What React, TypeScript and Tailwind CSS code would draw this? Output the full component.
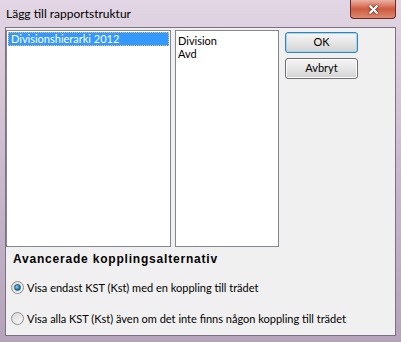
import { X } from 'lucide-react';

const UI = { fontFamily: 'Lato, "Liberation Sans", Arial, sans-serif' };

function Knapp({ text, standard }: { text: string; standard?: boolean }) {
  return (
    <button
      className={`h-[21px] w-[73px] rounded-[3px] border bg-gradient-to-b from-[#f6f6f6] via-[#e6e6e6] to-[#d2d2d2] text-[11px] text-black ${
        standard ? 'border-[#3c7fb1] shadow-[inset_0_0_0_1px_#9ed8f4]' : 'border-[#707070] shadow-[inset_0_0_0_1px_#fbfbfb]'
      }`}
      style={UI}
    >
      {text}
    </button>
  );
}

function Radio({ vald, text }: { vald?: boolean; text: string }) {
  return (
    <label className="flex items-center gap-[3px] text-[11px] leading-[13px] text-black" style={UI}>
      <span className="flex size-[13px] items-center justify-center rounded-full border border-[#8e8f8f] bg-gradient-to-br from-[#d8d8d8] to-[#fbfbfb]">
        {vald && (
          <span className="size-[7px] rounded-full border border-[#1a4f6d] bg-[radial-gradient(circle_at_35%_35%,#8ad3f5,#2079ae_60%,#14507a)]" />
        )}
      </span>
      {text}
    </label>
  );
}

export default function App() {
  return (
    <div className="flex h-[342px] w-[401px] flex-col bg-gradient-to-b from-[#e2d6e4] via-[#c9b9cd] to-[#b4a4ba]">
      {/* titelrad */}
      <div className="flex h-[27px] shrink-0 items-start justify-between">
        <span className="mt-[5px] ml-[6px] text-[12px] text-black" style={UI}>
          Lägg till rapportstruktur
        </span>
        <button className="mr-[5px] flex h-[19px] w-[46px] items-center justify-center rounded-b-[4px] border border-t-0 border-[#6b2a22] bg-gradient-to-b from-[#eab0a2] via-[#cf5a40] to-[#dc8a70]">
          <X className="size-[13px] text-white drop-shadow-[0_0_1px_#3a1a14]" strokeWidth={4} />
        </button>
      </div>

      {/* klientyta */}
      <div className="mx-[5px] mb-[6px] flex min-h-0 flex-1 flex-col border border-[#7d7082] bg-[#f0f0f0]">
        <div className="mt-[2px] flex shrink-0 items-start">
          <div className="h-[217px] w-[165px] border border-[#828790] bg-white p-[1px]" style={UI}>
            <div className="h-[14px] border border-dotted border-[#f0c070] bg-[#3399ff] pl-[2px] text-[11px] leading-[12px] text-white">
              Divisionshierarki 2012
            </div>
          </div>
          <div className="ml-[4px] h-[217px] w-[104px] border border-[#828790] bg-white px-[2px] pt-[3px] text-[11px] leading-[13px] text-black" style={UI}>
            <div>Division</div>
            <div>Avd</div>
          </div>
          <div className="ml-[6px] mt-[2px] flex flex-col gap-[5px]">
            <Knapp text="OK" standard />
            <Knapp text="Avbryt" />
          </div>
        </div>

        <div className="ml-[7px] mt-[5px] text-[12px] font-bold leading-[15px] tracking-[0.8px] text-black" style={{ fontFamily: '"Liberation Sans", Arial, sans-serif' }}>
          Avancerade kopplingsalternativ
        </div>

        <div className="ml-[5px] mt-[14px] flex flex-col gap-[18px]">
          <Radio vald text="Visa endast KST (Kst) med en koppling till trädet" />
          <Radio text="Visa alla KST (Kst) även om det inte finns någon koppling till trädet" />
        </div>
      </div>
    </div>
  );
}
